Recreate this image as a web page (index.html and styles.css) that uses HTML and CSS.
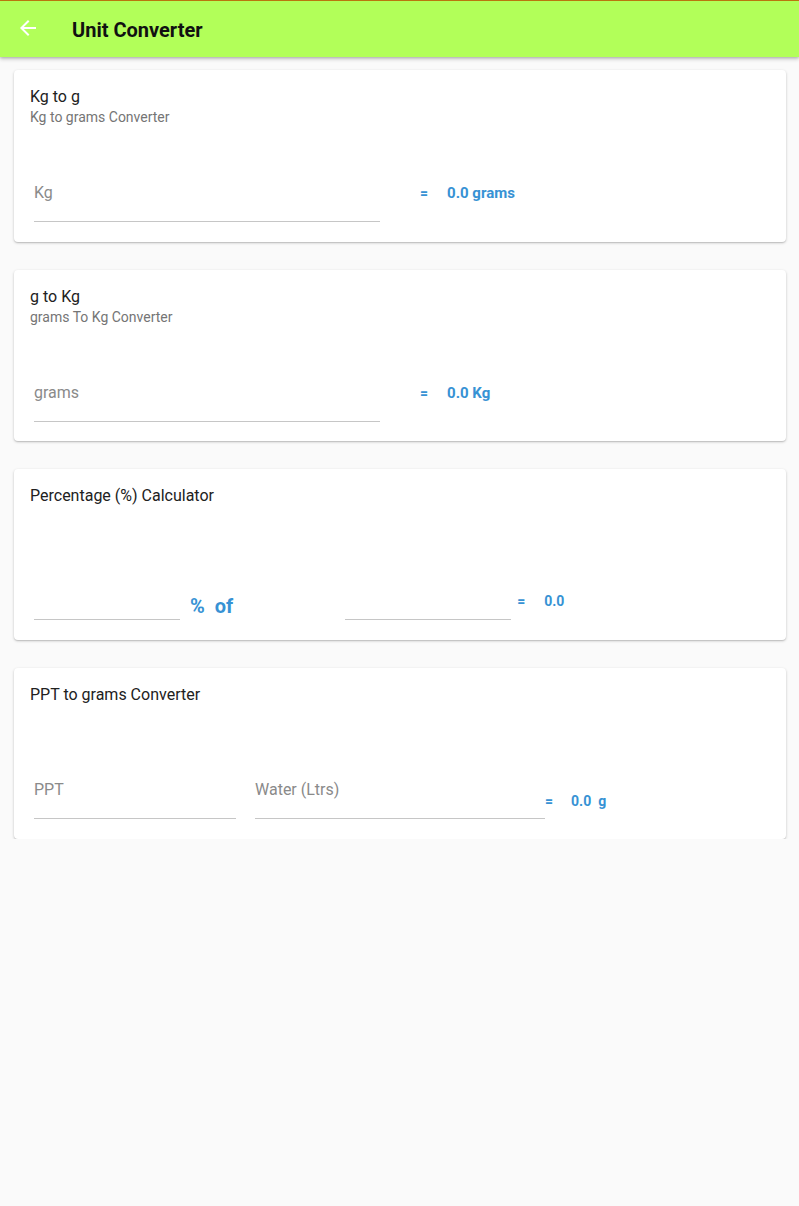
FILE: index.html
```html
<!DOCTYPE html>
<html>
<head>
<meta charset="utf-8">
<link rel="stylesheet" href="styles.css">
</head>
<body>
<div class="topline"></div>
<header class="appbar">
  <span class="back">
    <svg viewBox="0 0 24 24" width="24" height="24"><path fill="#fff" d="M20 11H7.83l5.59-5.59L12 4l-8 8 8 8 1.41-1.41L7.83 13H20v-2z"/></svg>
  </span>
  <h1 class="appbar-title">Unit Converter</h1>
</header>
<main class="content">
  <section class="card">
    <div class="card-head">
      <div class="title">Kg to g</div>
      <div class="subtitle">Kg to grams Converter</div>
    </div>
    <div class="row">
      <div class="field w346"><span class="ph">Kg</span></div>
      <span class="eq eq-a">=</span>
      <span class="val val-a">0.0 grams</span>
    </div>
  </section>
  <section class="card">
    <div class="card-head">
      <div class="title">g to Kg</div>
      <div class="subtitle">grams To Kg Converter</div>
    </div>
    <div class="row">
      <div class="field w346"><span class="ph">grams</span></div>
      <span class="eq eq-a">=</span>
      <span class="val val-a">0.0 Kg</span>
    </div>
  </section>
  <section class="card">
    <div class="card-head">
      <div class="title">Percentage (%) Calculator</div>
    </div>
    <div class="row row-pct">
      <div class="field w146"><span class="ph">&nbsp;</span></div>
      <span class="pct">%  of</span>
      <div class="field w166"><span class="ph">&nbsp;</span></div>
      <span class="eq eq-c">=</span>
      <span class="val val-c">0.0</span>
    </div>
  </section>
  <section class="card">
    <div class="card-head">
      <div class="title">PPT to grams Converter</div>
    </div>
    <div class="row row-ppt">
      <div class="field w202"><span class="ph">PPT</span></div>
      <div class="field w290"><span class="ph">Water (Ltrs)</span></div>
      <span class="eq eq-d">=</span>
      <span class="val val-d">0.0  g</span>
    </div>
  </section>
</main>
</body>
</html>
```

FILE: styles.css
```css
* { box-sizing: border-box; }
html, body {
  margin: 0;
  padding: 0;
  background: #fafafa;
  font-family: Roboto, "Noto Sans", "Liberation Sans", sans-serif;
  color: #212121;
}
.topline {
  height: 1px;
  background: #c07a10;
}
.appbar {
  height: 56px;
  background: #b2ff59;
  display: flex;
  align-items: center;
  box-shadow: 0 2px 4px rgba(0,0,0,0.22), 0 1px 2px rgba(0,0,0,0.12);
  position: relative;
  z-index: 2;
}
.back {
  width: 24px;
  height: 24px;
  margin-left: 16px;
  margin-top: -2px;
  display: flex;
}
.appbar-title {
  margin: 0 0 0 32px;
  font-size: 20px;
  font-weight: 700;
  color: #111;
  line-height: 24px;
  margin-top: 2px;
}
.content {
  padding: 13px 13px 0 14px;
  display: flex;
  flex-direction: column;
  gap: 28px;
}
.card {
  background: #fff;
  border-radius: 4px;
  box-shadow: 0 1px 3px rgba(0,0,0,0.2), 0 1px 1px rgba(0,0,0,0.1);
  padding: 17px 20px 20px 16px;
  height: 172px;
}
.card:nth-child(2), .card:nth-child(3), .card:nth-child(4) { height: 171px; }
.card-head { height: 40px; }
.title {
  font-size: 16px;
  line-height: 20px;
}
.subtitle {
  font-size: 14px;
  line-height: 20px;
  color: #757575;
}
.row {
  display: flex;
  align-items: flex-start;
  margin-top: 54px;
  padding-left: 4px;
}
.row-pct { margin-top: 53px; }
.row-ppt { margin-top: 53px; }
.field {
  border-bottom: 1.5px solid #c6c6c6;
  padding-bottom: 16px;
  flex: none;
}
.ph {
  display: block;
  font-size: 16px;
  line-height: 24px;
  color: #8a8a8a;
}
.w346 { width: 346px; }
.w146 { width: 146px; }
.w166 { width: 166px; }
.w202 { width: 202px; }
.w290 { width: 290px; margin-left: 19px; }
.eq, .val {
  color: #3792d4;
  font-weight: 700;
  font-size: 14px;
  line-height: 24px;
  white-space: pre;
}
.val-a { font-size: 15px; }
.eq-a { margin-left: 40px; }
.val-a { margin-left: 19px; }
.pct {
  color: #3792d4;
  font-weight: 700;
  font-size: 20px;
  line-height: 26px;
  white-space: pre;
  margin-left: 10px;
  margin-right: 112px;
  margin-top: 14px;
}
.eq-c { margin-left: 6px; margin-top: 10px; }
.val-c { margin-left: 19px; margin-top: 10px; }
.eq-d { margin-top: 11px; }
.val-d { margin-left: 18px; margin-top: 11px; }
```
